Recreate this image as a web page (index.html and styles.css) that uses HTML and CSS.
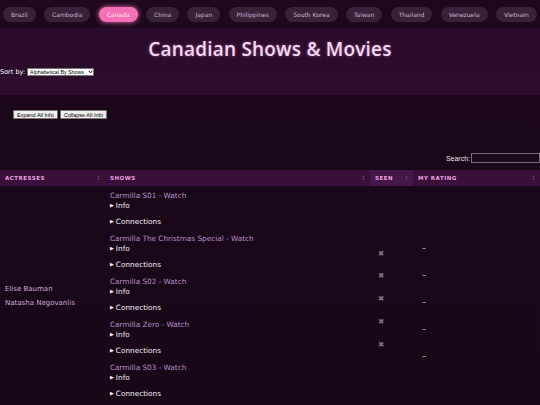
FILE: index.html
```html
<!DOCTYPE html>
<html>
<head>
<meta charset="utf-8">
<link rel="stylesheet" href="styles.css">
</head>
<body>
<nav class="countries">
  <a class="pill">Brazil</a>
  <a class="pill">Cambodia</a>
  <a class="pill active">Canada</a>
  <a class="pill">China</a>
  <a class="pill">Japan</a>
  <a class="pill">Philippines</a>
  <a class="pill">South Korea</a>
  <a class="pill">Taiwan</a>
  <a class="pill">Thailand</a>
  <a class="pill">Venezuela</a>
  <a class="pill">Vietnam</a>
</nav>
<header class="hero">
  <h1 class="title">Canadian Shows &amp; Movies</h1>
  <div class="sort">
    <label class="sort-label">Sort by:</label>
    <span class="select-wrap">
      <select class="sort-select"><option>Alphabetical By Shows</option></select>
      <svg class="chev" width="5" height="4" viewBox="0 0 5 4"><path d="M0.6 0.8 L2.5 2.8 L4.4 0.8" fill="none" stroke="#000" stroke-width="1"/></svg>
    </span>
  </div>
</header>
<main class="content">
  <div class="actions">
    <button class="btn">Expand All Info</button>
    <button class="btn">Collapse All Info</button>
  </div>
  <div class="search">
    <label class="search-label">Search:</label>
    <input class="search-input" type="text">
  </div>
  <table class="grid">
    <colgroup>
      <col class="col-act">
      <col class="col-shows">
      <col class="col-seen">
      <col class="col-rating">
    </colgroup>
    <thead>
      <tr>
        <th>Actresses<span class="sorter">⁝</span></th>
        <th>Shows<span class="sorter">⁝</span></th>
        <th class="th-seen">Seen<span class="sorter">⁝</span></th>
        <th>My Rating<span class="sorter">⁝</span></th>
      </tr>
    </thead>
    <tbody>
      <tr>
        <td class="cell-act">
          <div class="actress">Elise Bauman</div>
          <div class="actress">Natasha Negovanlis</div>
        </td>
        <td class="cell-shows">
          <div class="show">
            <a class="show-title">Carmilla S01 - Watch</a>
            <details class="info"><summary>Info</summary></details>
            <details class="conn"><summary>Connections</summary></details>
          </div>
          <div class="show">
            <a class="show-title">Carmilla The Christmas Special - Watch</a>
            <details class="info"><summary>Info</summary></details>
            <details class="conn"><summary>Connections</summary></details>
          </div>
          <div class="show">
            <a class="show-title">Carmilla S02 - Watch</a>
            <details class="info"><summary>Info</summary></details>
            <details class="conn"><summary>Connections</summary></details>
          </div>
          <div class="show">
            <a class="show-title">Carmilla Zero - Watch</a>
            <details class="info"><summary>Info</summary></details>
            <details class="conn"><summary>Connections</summary></details>
          </div>
          <div class="show">
            <a class="show-title">Carmilla S03 - Watch</a>
            <details class="info"><summary>Info</summary></details>
            <details class="conn"><summary>Connections</summary></details>
          </div>
        </td>
        <td class="cell-seen">
          <div class="seen">✖</div>
          <div class="seen">✖</div>
          <div class="seen">✖</div>
          <div class="seen">✖</div>
          <div class="seen">✖</div>
        </td>
        <td class="cell-rating">
          <div class="rating">–</div>
          <div class="rating">–</div>
          <div class="rating">–</div>
          <div class="rating">–</div>
          <div class="rating">–</div>
        </td>
      </tr>
    </tbody>
  </table>
</main>
</body>
</html>
```
FILE: styles.css
```css
html, body {
  margin: 0;
  padding: 0;
  background: #170817;
}
body {
  font-family: "DejaVu Sans", "Open Sans", sans-serif;
  color: #e6d6e6;
  width: 540px;
  overflow: hidden;
}
.countries {
  height: 28px;
  background: #1e081d;
  display: flex;
  align-items: center;
  justify-content: space-between;
  padding: 0 3px 0 3px;
  box-sizing: border-box;
}
.pill {
  font-size: 6px;
  color: #c9b3d3;
  background: #382237;
  border-radius: 8px;
  padding: 4px 8px;
  line-height: 7px;
}
.pill.active {
  background: #f56fb6;
  color: #fde6f3;
  box-shadow: 0 0 5px #f56fb6;
}
.hero {
  height: 67px;
  background: linear-gradient(180deg, #2a0b2a 0%, #2d0c2d 100%);
  box-sizing: border-box;
  padding-top: 9px;
}
.title {
  margin: 0;
  text-align: center;
  font-family: "Open Sans", sans-serif;
  font-size: 19px;
  font-weight: 600;
  letter-spacing: 0.2px;
  color: #f0daee;
  line-height: 24px;
  text-shadow: 0 0 3px rgba(240, 130, 215, 0.55);
}
.sort {
  margin-top: 7px;
  display: flex;
  align-items: center;
  gap: 2px;
  font-family: "Liberation Sans", sans-serif;
}
.sort-label {
  font-family: "DejaVu Sans", sans-serif;
  font-size: 6.5px;
  color: #ffffff;
}
.select-wrap {
  position: relative;
  display: inline-block;
  height: 8px;
}
.sort-select {
  appearance: none;
  -webkit-appearance: none;
  font-family: "Liberation Sans", sans-serif;
  font-size: 5.3px;
  width: 67px;
  height: 8px;
  padding: 0 6px 0 2px;
  border: 1px solid #777;
  background: #fff;
  color: #000;
  border-radius: 1px;
  box-sizing: border-box;
  line-height: 6px;
  display: block;
}
.chev {
  position: absolute;
  right: 1.5px;
  top: 2px;
}
.content {
  background: linear-gradient(180deg, #1a081a 0%, #170717 100%);
  padding-top: 15px;
}
.actions {
  padding-left: 13px;
  display: flex;
  gap: 2px;
}
.btn {
  font-family: "Liberation Sans", sans-serif;
  font-size: 5.5px;
  padding: 1px 3px;
  height: 9px;
  line-height: 6px;
  background: #efefef;
  border: 1px solid #767676;
  border-radius: 1px;
  color: #000;
}
.search {
  display: flex;
  justify-content: flex-end;
  align-items: center;
  margin-top: 34px;
  gap: 1px;
}
.search-label {
  font-family: "Liberation Sans", sans-serif;
  font-size: 7px;
  color: #e8e0e8;
}
.search-input {
  width: 69px;
  height: 10px;
  box-sizing: border-box;
  border: 1px solid #7a6a7a;
  background: #1a0a1a;
  padding: 0;
}
.grid {
  margin-top: 7px;
  width: 540px;
  border-collapse: collapse;
  table-layout: fixed;
}
.col-act { width: 105px; }
.col-shows { width: 265px; }
.col-seen { width: 43px; }
.col-rating { width: 127px; }
.grid th {
  height: 16px;
  padding: 0 5px;
  text-align: left;
  font-size: 5.5px;
  font-weight: 700;
  letter-spacing: 0.5px;
  text-transform: uppercase;
  color: #e9a3e0;
  background: #3a0f3a;
  position: relative;
  box-sizing: border-box;
}
.grid th.th-seen {
  background: #451745;
}
.sorter {
  position: absolute;
  right: 5px;
  top: 4px;
  color: #7a4a7a;
  font-size: 6px;
}
.grid td {
  vertical-align: middle;
  padding: 0 5px;
  box-sizing: border-box;
}
.cell-act {
  font-size: 7px;
  color: #cfa7d9;
}
.actress {
  line-height: 14px;
}
.grid td.cell-shows {
  padding-top: 5px;
  font-size: 7.3px;
}
.show {
  padding-bottom: 7px;
}
.show-title {
  display: block;
  color: #b98cc9;
  line-height: 10px;
}
.info, .conn {
  color: #ffffff;
  line-height: 10px;
}
.info summary, .conn summary {
  list-style: none;
  cursor: pointer;
  color: #f4eef4;
}
.info summary::before, .conn summary::before {
  content: "▶";
  font-size: 5px;
  margin-right: 2px;
  position: relative;
  top: -1px;
}
.conn {
  margin-top: 6px;
}
.grid td.cell-seen {
  padding-left: 8px;
  padding-top: 7px;
}
.seen {
  color: #7d747d;
  font-size: 7.5px;
  line-height: 22.7px;
}
.grid td.cell-rating {
  padding-left: 9px;
  padding-top: 12px;
}
.rating {
  color: #d9c4e6;
  font-size: 8px;
  line-height: 27px;
}
```
